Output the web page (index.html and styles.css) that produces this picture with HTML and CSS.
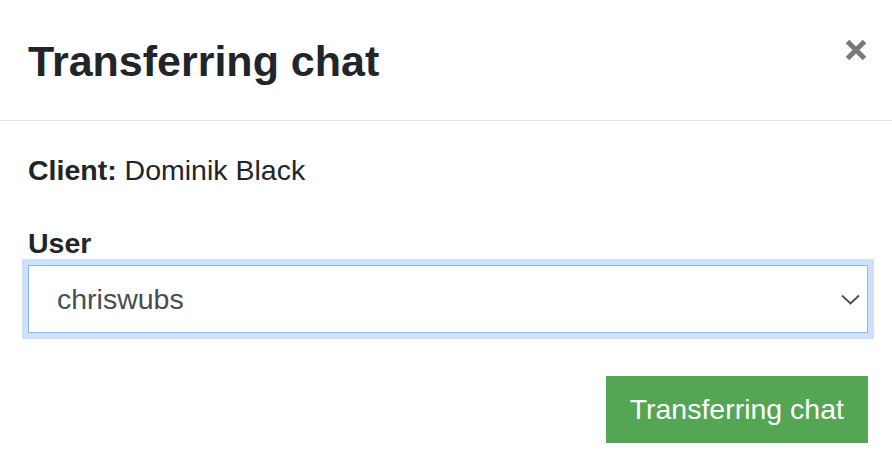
FILE: index.html
```html
<!DOCTYPE html>
<html lang="en">
<head>
  <meta charset="UTF-8" />
  <meta name="viewport" content="width=device-width, initial-scale=1.0"/>
  <title>Transferring chat</title>
  <link rel="stylesheet" href="styles.css">
</head>
<body>
  <div class="modal">
    <div class="modal-header">
      <h4 class="modal-title">Transferring chat</h4>
      <button class="close" type="button" aria-label="Close">
        <svg width="22" height="22" viewBox="0 0 22 22"><path d="M2.5 2.5 L19.5 19.5 M19.5 2.5 L2.5 19.5" stroke="#797979" stroke-width="5" fill="none"/></svg>
      </button>
    </div>

    <div class="modal-body">
      <p class="client"><strong>Client:</strong> Dominik Black</p>
      <label for="user">User</label>
      <div class="select-wrap">
        <select id="user" class="form-control">
          <option>chriswubs</option>
        </select>
        <svg class="chevron" width="19" height="11" viewBox="0 0 19 11"><path d="M1 1.5 L9.5 9.5 L18 1.5" stroke="#4a4d52" stroke-width="1.8" fill="none"/></svg>
      </div>
    </div>

    <div class="modal-footer">
      <button class="btn-success" type="button">Transferring chat</button>
    </div>
  </div>
</body>
</html>
```

FILE: styles.css
```css
body { margin: 0; background: #fff; color: #212529; font-family: "Liberation Sans", Arial, sans-serif; font-size: 28.5px; line-height: 42px; }
.modal { width: 892px; }
.modal-header { height: 120px; border-bottom: 1px solid #e3e3e3; padding: 0 25px 0 28px; display: flex; align-items: center; justify-content: space-between; box-sizing: content-box; }
.modal-title { margin: 0; font-size: 43px; line-height: 51px; font-weight: bold; padding-top: 2px; }
.close { align-self: flex-start; margin-top: 39px; padding: 0; border: none; background: none; width: 22px; height: 22px; cursor: pointer; }
.close svg { display: block; }
.modal-body { padding: 28px 24px 0 28px; }
.client { margin: 0 0 31px; }
label { display: block; font-weight: bold; margin-bottom: 1px; }
.select-wrap { position: relative; }
.form-control { display: block; width: 100%; height: 68px; box-sizing: border-box; border: 1px solid #8cb8f2; border-radius: 0; padding: 0 28px; background: #fff; color: #484d53; font-family: inherit; font-size: 28.5px; -webkit-appearance: none; appearance: none; box-shadow: 0 0 0 6px #cfe0fb; outline: none; }
.chevron { position: absolute; right: 8px; top: 29px; }
.modal-footer { padding: 43px 24px 0 28px; display: flex; justify-content: flex-end; }
.btn-success { height: 67px; padding: 0 24px; border: none; border-radius: 0; background: #54a654; color: #fff; font-family: inherit; font-size: 28.5px; cursor: pointer; }
```
